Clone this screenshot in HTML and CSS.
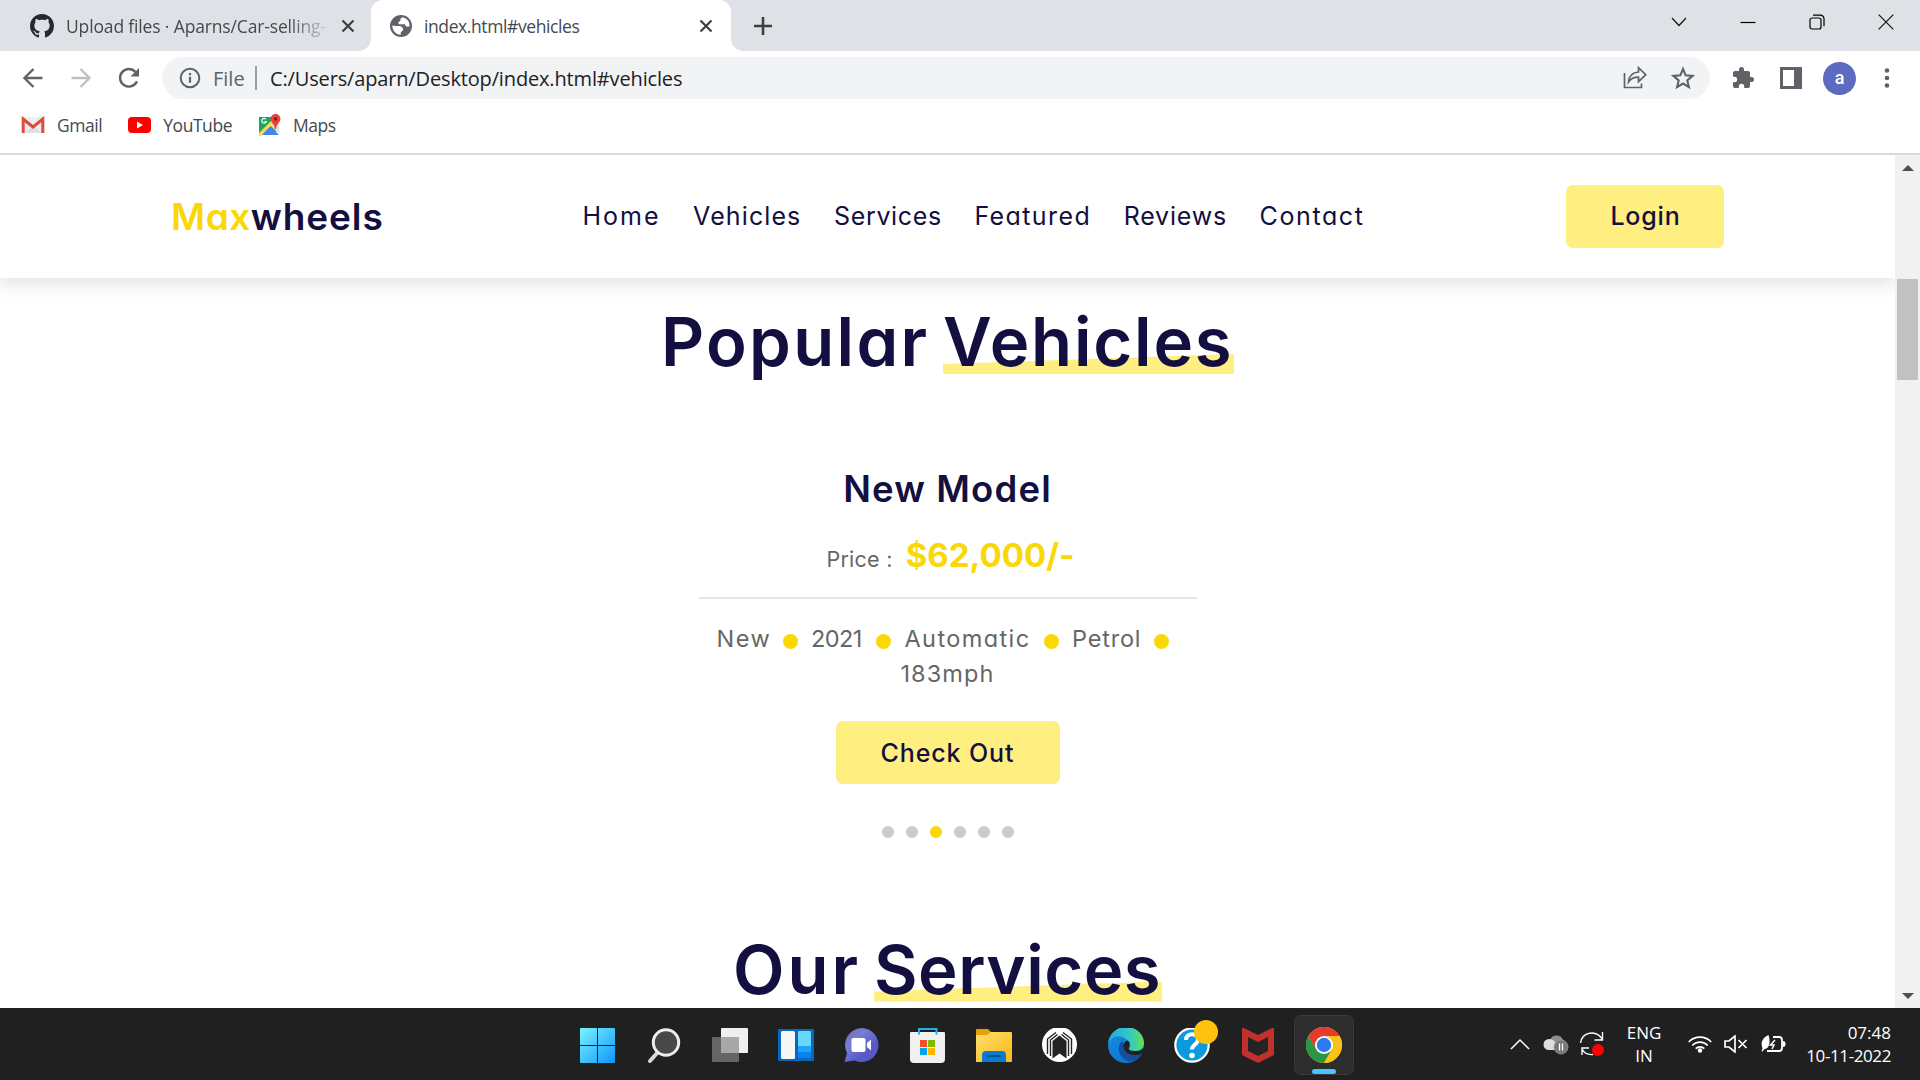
FILE: index.html
```html
<!DOCTYPE html>
<html lang="en">
<head>
<meta charset="utf-8">
<title>Maxwheels</title>
<link rel="stylesheet" href="styles.css">
</head>
<body>
<div class="screen">
  <div class="tabstrip">
    <div class="tab">
      <svg class="fav" width="24" height="24" viewBox="0 0 16 16"><path fill="#24292f" d="M8 0C3.58 0 0 3.58 0 8c0 3.54 2.29 6.53 5.47 7.59.4.07.55-.17.55-.38 0-.19-.01-.82-.01-1.49-2.01.37-2.53-.49-2.69-.94-.09-.23-.48-.94-.82-1.13-.28-.15-.68-.52-.01-.53.63-.01 1.08.58 1.23.82.72 1.21 1.87.87 2.33.66.07-.52.28-.87.51-1.07-1.78-.2-3.64-.89-3.64-3.95 0-.87.31-1.59.82-2.15-.08-.2-.36-1.02.08-2.12 0 0 .67-.21 2.2.82.64-.18 1.32-.27 2-.27s1.36.09 2 .27c1.53-1.04 2.2-.82 2.2-.82.44 1.1.16 1.92.08 2.12.51.56.82 1.27.82 2.15 0 3.07-1.87 3.75-3.65 3.95.29.25.54.73.54 1.48 0 1.07-.01 1.93-.01 2.2 0 .21.15.46.55.38A8.01 8.01 0 0 0 16 8c0-4.42-3.58-8-8-8z"/></svg>
      <span class="tab-title fade">Upload files · Aparns/Car-selling-</span>
      <svg class="x" width="14" height="14" viewBox="0 0 14 14"><path d="M1.5 1.5l11 11M12.500 1.500l-11 11" stroke="#3c4043" stroke-width="2.200"/></svg>
    </div>
    <div class="tab active">
      <svg class="fav" width="22" height="22" viewBox="0 0 22 22"><circle cx="11" cy="11" r="11" fill="#5f6368"/><path d="M12.500 2.300c-2 .8-2.500 2-2 3.500l-2 1.200v2.300h6.500l1 2.200h3.500c.5-4.500-2-8-7-9.200zM2.300 10.500c0 5 3.500 9 8.500 9.200v-2.500l2.200-2v-2l-2.500-2.200H5.500z" fill="#fff"/></svg>
      <span class="tab-title">index.html#vehicles</span>
      <svg class="x" width="14" height="14" viewBox="0 0 14 14"><path d="M1.500 1.500l11 11M12.500 1.500l-11 11" stroke="#3c4043" stroke-width="2.200"/></svg>
    </div>
    <svg class="plus" width="18" height="18" viewBox="0 0 18 18"><path d="M9 0v18M0 9h18" stroke="#3c4043" stroke-width="2.600"/></svg>
    <div class="winctl">
      <svg width="16" height="16" viewBox="0 0 16 16"><path d="M1 4l7 7.500L15 4" fill="none" stroke="#111" stroke-width="1.200"/></svg>
      <svg width="16" height="16" viewBox="0 0 16 16"><path d="M.5 8.500h15" stroke="#000" stroke-width="1.200"/></svg>
      <svg width="16" height="16" viewBox="0 0 16 16"><rect x="1" y="4" width="11" height="11" rx="2" fill="none" stroke="#000" stroke-width="1.200"/><path d="M4 1.200h7.500a3.500 3.500 0 0 1 3.500 3.500v7.500" fill="none" stroke="#000" stroke-width="1.200"/></svg>
      <svg width="16" height="16" viewBox="0 0 16 16"><path d="M.7.7l14.600 14.600M15.300.7L.7 15.300" stroke="#111" stroke-width="1.200"/></svg>
    </div>
  </div>

  <div class="toolbar">
    <svg class="back" width="20" height="20" viewBox="0 0 20 20"><path d="M19.500 10H2M10.500 1L1.500 10l9 9" fill="none" stroke="#5f6368" stroke-width="2.300"/></svg>
    <svg class="fwd" width="20" height="20" viewBox="0 0 20 20"><path d="M.5 10H18M9.500 1l9 9-9 9" fill="none" stroke="#bdc1c6" stroke-width="2.300"/></svg>
    <svg class="reload" width="22" height="22" viewBox="0 0 22 22"><path d="M19 14.200A8.800 8.800 0 1 1 17.500 5" fill="none" stroke="#5f6368" stroke-width="2.400"/><path d="M21 1v8.500h-8.500z" fill="#5f6368"/></svg>
    <div class="omnibox">
      <svg width="22" height="22" viewBox="0 0 22 22"><circle cx="11" cy="11" r="9.300" fill="none" stroke="#5f6368" stroke-width="2"/><path d="M11 9.800v6M11 6v2.200" stroke="#5f6368" stroke-width="2.200"/></svg>
      <span class="scheme">File</span>
      <i class="divider"></i>
      <span class="url">C:/Users/aparn/Desktop/index.html#vehicles</span>
      <svg class="share" width="24" height="24" viewBox="0 0 24 24"><path d="M1.500 7v14.500h17v-4M5.500 16c.5-6 3.500-9.500 10-10V1.700l7.300 7-7.300 7v-4.500c-4.500 0-7.500 1.300-10 4.800z" fill="none" stroke="#5f6368" stroke-width="1.700"/></svg>
      <svg class="star" width="24" height="24" viewBox="0 0 24 24"><path d="M12 3l2.700 6.300 6.800.6-5.200 4.500 1.600 6.700L12 17.500l-5.900 3.600 1.600-6.700L2.500 9.900l6.800-.6z" fill="none" stroke="#5f6368" stroke-width="2.100"/></svg>
    </div>
    <svg class="ext" width="24" height="24" viewBox="0 0 24 24"><path fill="#5f6368" d="M20.500 11H19V7a2 2 0 0 0-2-2h-4V3.500a2.500 2.500 0 0 0-5 0V5H4a2 2 0 0 0-2 2v3.800h1.500a2.700 2.700 0 0 1 0 5.400H2V20c0 1.100.9 2 2 2h3.800v-1.500a2.700 2.700 0 0 1 5.400 0V22H17a2 2 0 0 0 2-2v-4h1.500a2.500 2.500 0 0 0 0-5z"/></svg>
    <svg class="panel" width="22" height="22" viewBox="0 0 22 22"><rect width="22" height="22" fill="#5f6368"/><rect x="3" y="3" width="11" height="16" fill="#fff"/></svg>
    <span class="avatar">a</span>
    <svg class="menu" width="6" height="22" viewBox="0 0 6 22"><g fill="#5f6368"><circle cx="3" cy="3.500" r="2.300"/><circle cx="3" cy="11" r="2.300"/><circle cx="3" cy="18.500" r="2.300"/></g></svg>
  </div>

  <div class="bookmarks">
    <svg width="24" height="18" viewBox="0 0 24 18"><rect x="1" y="1" width="22" height="16" fill="#eceff1"/><path d="M4 17l8-8 8 8z" fill="#dcdfe1"/><path d="M2.200 17V3L12 11l9.800-8v14" fill="none" stroke="#dd4b3e" stroke-width="3"/></svg>
    <span class="bm gm">Gmail</span>
    <svg width="23" height="16" viewBox="0 0 23 16"><rect width="23" height="16" rx="4" fill="#f00"/><path d="M9 4.500v7l6-3.500z" fill="#fff"/></svg>
    <span class="bm yt">YouTube</span>
    <svg width="23" height="23" viewBox="0 0 23 23"><path d="M1 3h17v18H1z" fill="#1fa463"/><path d="M2 21l9.500-9L21 21z" fill="#4285f4"/><path d="M1 19L16 4l4 4v2l-8.500 3L3 22H1z" fill="#ffd84d"/><path d="M13 12l8-3v11z" fill="#e0e0e0"/><path d="M7.800 5.200a2.300 2.300 0 1 0 .5 2.300H6.500" fill="none" stroke="#fff" stroke-width="1.200"/><path d="M17.500 0a5 5 0 0 0-5 5c0 3.500 4 4.500 4.500 10h1C18.500 9.500 22.500 8.500 22.500 5a5 5 0 0 0-5-5z" fill="#ea4335"/><circle cx="17.500" cy="5" r="1.800" fill="#7b1f17"/></svg>
    <span class="bm">Maps</span>
  </div>

  <div class="viewport">
    <div class="page">
      <header class="header">
        <div class="logo"><span class="max">Max</span><span class="wheels">wheels</span></div>
        <nav class="nav">
          <a class="n-home">Home</a><a class="n-vehicles">Vehicles</a><a class="n-services">Services</a><a class="n-featured">Featured</a><a class="n-reviews">Reviews</a><a class="n-contact">Contact</a>
        </nav>
        <button class="btn login">Login</button>
      </header>
      <h1 class="heading popular"><span class="w-popular">Popular</span><span class="mark w-vehicles">Vehicles</span></h1>
      <section class="slide">
        <h3 class="model">New Model</h3>
        <div class="price"><span>Price :</span><b>$62,000/-</b></div>
        <div class="facts">
          <span class="new">New</span><i></i><span class="year">2021</span><i></i><span class="auto">Automatic</span><i></i><span class="fuel">Petrol</span><i></i>
        </div>
        <div class="speed">183mph</div>
        <button class="btn checkout">Check Out</button>
        <div class="bullets"><i></i><i></i><i class="on"></i><i></i><i></i><i></i></div>
      </section>
      <h1 class="heading services"><span class="w-our">Our</span><span class="mark w-services">Services</span></h1>
    </div>
    <div class="scrollbar">
      <svg width="12" height="7" viewBox="0 0 12 7"><path d="M0 7l6-6 6 6z" fill="#505050"/></svg>
      <div class="thumb"></div>
      <svg class="down" width="12" height="7" viewBox="0 0 12 7"><path d="M0 0l6 6 6-6z" fill="#505050"/></svg>
    </div>
  </div>

  <div class="taskbar">
    <svg width="36" height="36" viewBox="0 0 36 36"><defs><linearGradient id="win" gradientUnits="userSpaceOnUse" x1="0" y1="0" x2="36" y2="36"><stop offset="0" stop-color="#7df3ff"/><stop offset="1" stop-color="#0a93fb"/></linearGradient></defs><path d="M1 0h16v17H0V1q0-1 1-1zM18 0h16q1 0 1 1v16H18zM0 18h17v17H1q-1 0-1-1zM18 18h17v16q0 1-1 1H18z" fill="url(#win)"/></svg>
    <svg width="36" height="36" viewBox="0 0 36 36"><path d="M4 33l8-9" stroke="#d5d7da" stroke-width="4" stroke-linecap="round"/><circle cx="20" cy="14.500" r="12.700" fill="#484848" stroke="#eee" stroke-width="3"/></svg>
    <svg width="36" height="36" viewBox="0 0 36 36"><rect x="9" y="0" width="27" height="25" rx="1" fill="#efefef"/><rect x="0" y="9" width="27" height="25" rx="1" fill="#656565"/><rect x="9" y="9" width="18" height="16" fill="#a8a8a8"/></svg>
    <svg width="36" height="36" viewBox="0 0 36 36"><rect x="0" y="1" width="36" height="32" rx="1" fill="#0967bd"/><rect x="3" y="3" width="14" height="28" rx="1.500" fill="#f7f7f7"/><rect x="20" y="3" width="13" height="16" rx="1" fill="#68d8ff"/><path d="M20 18h13v6H20z" fill="#1ea5fb"/><path d="M20 24h13v5q0 1-1 1H21q-1 0-1-1z" fill="#0883ee"/></svg>
    <svg width="36" height="36" viewBox="0 0 36 36"><defs><linearGradient id="chat" x1="0" y1="0" x2=".9" y2="1"><stop offset="0" stop-color="#8a62a8"/><stop offset=".35" stop-color="#7280d8"/><stop offset=".7" stop-color="#5a58c8"/></linearGradient></defs><path d="M17.500 0a17 17 0 1 1-7 32.500L.5 34 3 25A17 17 0 0 1 17.500 0z" fill="url(#chat)"/><rect x="7.500" y="10" width="14" height="14" rx="2" fill="#fff"/><path d="M23 15l4-3.500v11L23 19z" fill="#fff"/></svg>
    <svg width="36" height="36" viewBox="0 0 36 36"><path d="M1 4h33q1 0 1 1v26q0 4-4 4H4q-4 0-4-4V5q0-1 1-1z" fill="#f0f0f0"/><path d="M9 6.500V1h17.500v5.500" fill="none" stroke="#1db0ea" stroke-width="2"/><path d="M10 12h7v7h-7z" fill="#f25022"/><path d="M18 12h7v7h-7z" fill="#7fba00"/><path d="M10 20h7v7h-7z" fill="#00a4ef"/><path d="M18 20h7v7h-7z" fill="#ffb900"/></svg>
    <svg width="36" height="36" viewBox="0 0 36 36"><defs><linearGradient id="fold" x1="0" y1="0" x2="1" y2="1"><stop offset="0" stop-color="#ffdf70"/><stop offset="1" stop-color="#fcb714"/></linearGradient></defs><path d="M0 2q0-1 1-1h11l4 4v5H0z" fill="#e3a008"/><path d="M0 7h11l4-3h20q1 0 1 1v28q0 1-1 1H0z" fill="url(#fold)"/><path d="M6 34v-7q0-4 4-4h16q4 0 4 4v7z" fill="#0a7bd0"/><path d="M11 28h14" stroke="#064d8c" stroke-width="1.800"/></svg>
    <svg width="36" height="36" viewBox="0 0 36 36"><circle cx="17.500" cy="16.500" r="17.500" fill="#fff"/><path d="M10.500 30.500V13l7-5.500 7 5.500v17.500l-7-5z" fill="#242424"/><path d="M5.500 26V11L14 4.500M29.500 26V11L21 4.500M8.500 28V12l7-5.500M26.500 28V12l-7-5.500" fill="none" stroke="#242424" stroke-width="1.400"/></svg>
    <svg width="36" height="36" viewBox="0 0 36 36"><defs><linearGradient id="e1"><stop offset="0" stop-color="#27a7e4"/><stop offset=".6" stop-color="#33c8c8"/><stop offset="1" stop-color="#62e04c"/></linearGradient><linearGradient id="e2" x1="0" y1="0" x2="1" y2="1"><stop offset="0" stop-color="#1b8ee0"/><stop offset="1" stop-color="#0a6cc8"/></linearGradient></defs><g transform="translate(0 -1)"><circle cx="18" cy="18" r="18" fill="url(#e2)"/><path d="M14 14c-6 6-3 17 6 20 6 1 11-2 14-7-6 2-16 0-17-8z" fill="#12509c"/><path d="M0 16C2 6 9 0 18 0c10 0 18 7 18 16 0 5-4 8-9 8-4 0-7-1-6-3 2-3 1-7-3-9C12 7 4 9 0 16z" fill="url(#e1)"/><path d="M17 15c-3 3-1 10 4 12s10 1 13-.5h2.500V20c-2.500 3.500-6 4.300-9.500 4-4 0-7-1-6-3 1-2 1-6-1-7-1-.5-2 0-3 1z" fill="#202020"/></g></svg>
    <span class="help"><svg width="36" height="36" viewBox="0 0 36 36"><circle cx="18" cy="17" r="16.700" fill="#0a9add" stroke="#fff" stroke-width="2.200"/><path d="M12 12c0-8 12-7.500 12-.5 0 5-6 5-6 10" fill="none" stroke="#fff" stroke-width="4"/><circle cx="18" cy="27.500" r="2.800" fill="#fff"/></svg><i></i></span>
    <svg width="36" height="36" viewBox="0 0 36 36"><path d="M2-1l16 8 16-8v28L18 35 2 27z" fill="#c0302d"/><path d="M8 9l10 5 10-5v14l-10 5-10-5z" fill="#242424"/></svg>
    <div class="running"><svg width="36" height="36" viewBox="0 0 36 36"><circle cx="18" cy="18" r="18" fill="#fbc116"/><path d="M2.400 9A18 18 0 0 1 33.600 9H18L10.200 22.500z" fill="#e33b2e"/><path d="M2.400 9A18 18 0 0 0 18 36l7.800-13.500-15.600 0z" fill="#2c9547"/><path d="M33.600 9H18v4l8 9.500L18 36A18 18 0 0 0 33.600 9z" fill="#fbc116"/><circle cx="18" cy="18" r="9" fill="#fff"/><circle cx="18" cy="18" r="7.200" fill="#2b7cf0"/></svg><i></i></div>
    <div class="tray">
      <svg class="chev" width="20" height="12" viewBox="0 0 20 12"><path d="M1 11l9-9 9 9" fill="none" stroke="#fff" stroke-width="1.500"/></svg>
      <svg class="cloud" width="26" height="22" viewBox="0 0 26 22"><path d="M7 7a7 7 0 0 1 13 0 5 5 0 0 1 3 6H9z" fill="#8e8e8e"/><path d="M6 17a5.500 5.500 0 0 1 0-11q4 0 6 3l6 8z" fill="#dedede"/><circle cx="18" cy="14" r="7" fill="#777" stroke="#999" stroke-width=".8"/><path d="M16.500 10.500v7M19.500 10.500v7" stroke="#fff" stroke-width="1.300"/></svg>
      <svg class="sync" width="26" height="26" viewBox="0 0 26 26"><path d="M1.500 12C3 1 17-2 23.500 8.500M23.500 1v8h-8M3 24v-7h7M3 18c2 4 6 6 11 5.500" fill="none" stroke="#fff" stroke-width="1.400"/><circle cx="19" cy="19" r="6" fill="#f00"/></svg>
      <div class="lang"><span>ENG</span><span>IN</span></div>
      <svg class="wifi" width="24" height="18" viewBox="0 0 24 18"><g fill="none" stroke="#fff" stroke-width="1.800"><path d="M.8 7a15.500 15.500 0 0 1 22.400 0M4.300 10.500a10.500 10.500 0 0 1 15.400 0M7.700 13.700a6 6 0 0 1 8.600 0"/></g><circle cx="12" cy="15.500" r="2.200" fill="#fff"/></svg>
      <svg class="vol" width="24" height="18" viewBox="0 0 24 18"><path d="M1 6h4l6-5v16l-6-5H1zM14.500 5l8 8M22.500 5l-8 8" fill="none" stroke="#fff" stroke-width="1.700"/></svg>
      <svg class="bat" width="25" height="18" viewBox="0 0 25 18"><path d="M12 2h6q3 0 3 3v8q0 3-3 3H6" fill="none" stroke="#fff" stroke-width="1.800"/><path d="M22 6q2.500 0 2.500 3T22 12z" fill="#fff"/><path d="M7.500 0C2 2.500-1 7 1.500 13.500L.5 16l1.300.5 1-2C8 14 10 8 7.500 0z" fill="#fff"/><path d="M14 5l-4.500 5H13l-2 4" fill="none" stroke="#fff" stroke-width="1.500"/></svg>
      <div class="clock"><span>07:48</span><span class="date">10-11-2022</span></div>
    </div>
  </div>
</div>
</body>
</html>
```
FILE: styles.css
```css
*{box-sizing:border-box}
body{margin:0;overflow:hidden;background:#fff;font-family:"Open Sans","Noto Sans",sans-serif}
svg{display:block;flex:none}
i{display:block;flex:none}
span{white-space:nowrap}
.screen{width:1920px;height:1080px;display:flex;flex-direction:column}

/* Browser chrome */
.tabstrip{height:51px;background:#dee1e6;display:flex;align-items:center;flex:none}
.tab{width:371px;height:51px;display:flex;align-items:center;padding-left:30px;font-size:17.5px;color:#45494d}
.tab .fav{margin-right:12px}
.tab-title{width:261px;overflow:hidden;letter-spacing:-.15px}
.fade{-webkit-mask-image:linear-gradient(90deg,#000 85%,transparent 102%);mask-image:linear-gradient(90deg,#000 85%,transparent 102%)}
.tab .x{margin-left:14px}
.tab.active{width:360px;background:#fff;border-radius:12px 12px 0 0;padding-left:19px;position:relative}
.tab.active::before,.tab.active::after{content:"";position:absolute;bottom:0;width:12px;height:12px}
.tab.active::before{left:-12px;background:radial-gradient(circle at 0 0,transparent 11.5px,#fff 12px)}
.tab.active::after{right:-12px;background:radial-gradient(circle at 100% 0,transparent 11.5px,#fff 12px)}
.active .tab-title{letter-spacing:-.4px}
.plus{margin-left:23px}
.winctl{margin-left:auto;display:flex;gap:53px;padding:0 26px 8px 0}
.toolbar{height:54px;flex:none;display:flex;align-items:center;padding-left:23px}
.fwd{margin-left:28px}
.reload{margin:0 22px 0 27px}
.omnibox{width:1548px;height:42px;border-radius:21px;background:#f1f3f4;display:flex;align-items:center;padding-left:17px;font-size:20px;color:#202124}
.scheme{color:#5f6368;margin-left:12px;width:31px}
.divider{width:2px;height:24px;background:#9aa0a6;margin:0 13px 0 11px}
.url{letter-spacing:-.15px}
.share{margin-left:auto}
.star{margin:0 15px 0 24px}
.ext{margin-left:21px}
.panel{margin-left:25px}
.avatar{width:33px;height:33px;border-radius:50%;background:#5c6bc0;color:#fff;margin-left:21px;font:500 18px/31px Roboto,sans-serif;text-align:center}
.menu{margin-left:28px}
.bookmarks{height:50px;flex:none;border-bottom:2px solid #dadada;display:flex;align-items:center;padding:0 0 8px 21px;font-size:17.5px;color:#45494d}
.bm{margin-left:12px;letter-spacing:-.45px}
.gm{margin-right:26px}
.yt{margin-right:26px}

/* Web page */
.viewport{height:853px;flex:none;display:flex;overflow:hidden}
.page{width:1895px;display:flex;flex-direction:column;align-items:center;overflow:hidden;font-family:Inter,sans-serif;font-feature-settings:"cv11";color:#130f40}
.header{width:1895px;height:123px;flex:none;display:flex;align-items:center;justify-content:space-between;padding:0 171px 0 171px;box-shadow:0 8px 16px rgba(0,0,0,.1)}
.logo{font-size:37px;font-weight:600;display:flex;width:213px}
.max{color:#f9d806;letter-spacing:.5px}
.wheels{letter-spacing:.9px}
.nav{display:flex;gap:32.6px;font-size:25px;margin-left:-3px;padding-bottom:2px}
.n-home{letter-spacing:2px}
.n-vehicles{letter-spacing:1.1px}
.n-services{letter-spacing:.65px}
.n-featured{letter-spacing:1.4px}
.n-reviews{letter-spacing:.8px}
.n-contact{letter-spacing:1.6px}
.btn{border:0;border-radius:7px;background:#ffee80;color:#130f40;font:500 25px Inter,sans-serif;font-feature-settings:"cv11";height:63px;flex:none;padding:0}
.login{width:158px;letter-spacing:.8px;padding:0 0 2px 1px}
.heading{margin:16px 0 0;height:96px;line-height:96px;flex:none;font-size:67px;font-weight:600;display:flex}
.popular{line-height:95px}
.w-popular{letter-spacing:2.3px;width:282px}
.w-vehicles{letter-spacing:1.8px;width:291px}
.w-our{letter-spacing:3px;width:141px}
.w-services{letter-spacing:.5px;width:288px}
.mark{position:relative;isolation:isolate}
.mark::before{content:"";position:absolute;z-index:-1;left:0;right:0;bottom:16px;height:20px;background:#ffee80;clip-path:polygon(0 50%,100% 0,100% 100%,0 100%)}
.slide{width:498px;flex:none;display:flex;flex-direction:column;align-items:center;margin-top:71px;color:#666}
.model{margin:0;font-size:36.5px;line-height:56px;font-weight:600;color:#130f40;letter-spacing:1.15px}
.price{height:82px;width:100%;border-bottom:2px solid #e5e5e5;display:flex;align-items:baseline;justify-content:center;gap:13px;font-size:21.5px;line-height:77px;letter-spacing:.25px;padding-left:6px}
.price b{font-size:33px;color:#f9d806;letter-spacing:0}
.facts{align-self:flex-start;display:flex;align-items:center;font-size:23.5px;height:35px;margin:22px 0 0 18px}
.facts i{width:15px;height:15px;border-radius:50%;background:#f9d806;margin-top:5px}
.new{width:66.5px;letter-spacing:1.5px}
.year{width:64.5px;margin-left:13px;letter-spacing:-.6px}
.auto{width:139px;margin-left:14px;letter-spacing:1.4px}
.fuel{width:82px;margin-left:13.5px;letter-spacing:.8px}
.speed{font-size:23.5px;line-height:35px;letter-spacing:1.1px}
.checkout{width:224px;margin-top:30px;letter-spacing:.9px}
.bullets{display:flex;gap:12px;margin-top:42px}
.bullets i{width:12px;height:12px;border-radius:50%;background:#cbcbcb}
.bullets .on{background:#f9d806}
.services{margin-top:83.5px}
.scrollbar{width:25px;background:#f1f1f1;display:flex;flex-direction:column;align-items:center;padding:9px 0 8px}
.thumb{width:21px;height:101px;background:#c1c1c1;margin-top:108px}
.down{margin-top:auto}

/* Taskbar */
.taskbar{height:72px;flex:none;background:#202020;display:flex;align-items:center;padding:4px 0 0 580px;gap:30px}
.help{position:relative}
.help i{position:absolute;right:-8px;top:-8px;width:24px;height:24px;border-radius:50%;background:#ffc20e}
.running{width:60px;height:60px;margin:-2px 0 0 -12px;border-radius:7px;background:#2d2d2d;border:1px solid #3a3a3a;display:flex;flex-direction:column;align-items:center;padding-top:11px}
.running i{width:24px;height:5px;border-radius:3px;background:#4cc2ff;margin-top:6px}
.tray{margin:-4px 0 0 auto;display:flex;align-items:center;color:#fff;font-size:17px;line-height:23px;padding-right:29px}
.chev{margin-right:13px}
.cloud{margin-right:10px}
.lang{width:34px;margin:0 27px 0 22px;display:flex;flex-direction:column;align-items:center}
.vol{margin:0 13px 0 12px}
.clock{width:105px;display:flex;flex-direction:column;align-items:flex-end}
.date{letter-spacing:-.4px}
```
